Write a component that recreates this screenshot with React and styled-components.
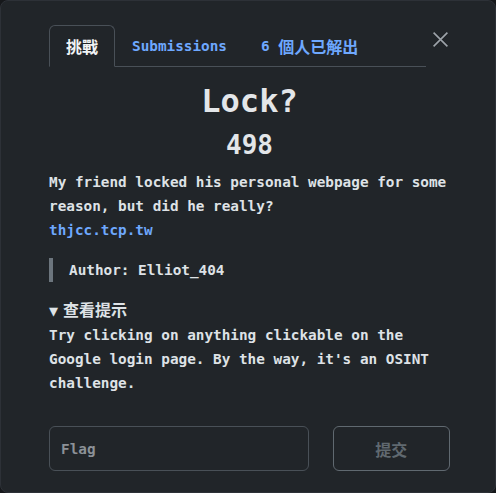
import React, { useState } from 'react';
import styled, { createGlobalStyle } from 'styled-components';

const GlobalStyle = createGlobalStyle`
  html, body {
    margin: 0;
    padding: 0;
    background: #16181b;
  }
  body {
    font-family: "DejaVu Sans Mono", "Noto Sans CJK TC", monospace;
    font-weight: bold;
    color: #dee2e6;
    -webkit-font-smoothing: antialiased;
  }
`;

const Modal = styled.div`
  box-sizing: border-box;
  width: 496px;
  height: 493px;
  background: #212529;
  border: 1px solid #2d3137;
  border-radius: 8px;
  padding: 24px 45px 0 48px;
  display: flex;
  flex-direction: column;
  overflow: hidden;
`;

const Header = styled.div`
  display: flex;
  align-items: flex-start;
  gap: 4px;
`;

const Tabs = styled.ul`
  list-style: none;
  margin: 0;
  padding: 0;
  flex: 1;
  display: flex;
  border-bottom: 1px solid #495057;
`;

const Tab = styled.li`
  box-sizing: border-box;
  height: 42px;
  padding: 0 16px;
  display: flex;
  align-items: center;
  margin-bottom: -1px;
  border: 1px solid ${p => (p.$active ? '#495057' : 'transparent')};
  border-bottom-color: ${p => (p.$active ? '#212529' : 'transparent')};
  border-radius: 6px 6px 0 0;
  color: ${p => (p.$active ? '#f1f3f5' : '#6ea8fe')};
  font-size: 14.35px;
  white-space: nowrap;
  cursor: pointer;
`;

const Cjk = styled.span`
  font-size: 16px;
`;

const CloseButton = styled.button`
  width: 20px;
  height: 20px;
  margin-top: 4px;
  padding: 0;
  border: 0;
  background: transparent;
  color: #9da3a9;
  display: flex;
  align-items: center;
  justify-content: center;
  cursor: pointer;
`;

const Title = styled.h1`
  margin: 15px 0 0;
  text-align: center;
  font-size: 32px;
  line-height: 38px;
  color: #e3e6e9;
`;

const Points = styled.div`
  margin-top: 10px;
  text-align: center;
  font-size: 26px;
  line-height: 30px;
  color: #e3e6e9;
`;

const Body = styled.div`
  margin-top: 10px;
  font-size: 14.35px;
  line-height: 24px;
`;

const Paragraph = styled.p`
  margin: 0;
`;

const Link = styled.a`
  color: #6ea8fe;
  text-decoration: none;
`;

const Quote = styled.blockquote`
  margin: 16px 0 0;
  padding: 0 0 0 16px;
  border-left: 4px solid #6c757d;
  line-height: 24px;
`;

const Hint = styled.details`
  margin-top: 17px;
  & > summary {
    list-style: none;
    cursor: pointer;
  }
  & > summary::-webkit-details-marker {
    display: none;
  }
`;

const Arrow = styled.span`
  font-size: 15px;
  margin-right: 5px;
`;

const FlagForm = styled.form`
  margin-top: auto;
  margin-bottom: 21px;
  display: flex;
  gap: 24px;
`;

const FlagInput = styled.input`
  box-sizing: border-box;
  width: 261px;
  height: 45px;
  padding: 0 11px;
  background: transparent;
  border: 1px solid #495057;
  border-radius: 6px;
  color: #dee2e6;
  font: inherit;
  font-size: 14.35px;
  outline: none;
  &::placeholder {
    color: #8c9197;
  }
`;

const SubmitButton = styled.button`
  box-sizing: border-box;
  width: 118px;
  height: 45px;
  background: transparent;
  border: 1px solid #6c757d;
  border-radius: 6px;
  color: #6c757d;
  font: inherit;
  font-size: 16px;
  opacity: 0.85;
`;

const CloseIcon = () => (
  <svg width="17" height="17" viewBox="0 0 16 16" fill="none" stroke="currentColor" strokeWidth="1.5">
    <path d="M1.5 1.5l13 13M14.5 1.5l-13 13" />
  </svg>
);

export default function App() {
  const [tab, setTab] = useState(0);
  const [flag, setFlag] = useState('');

  return (
    <>
      <GlobalStyle />
      <Modal>
        <Header>
          <Tabs>
            <Tab $active={tab === 0} onClick={() => setTab(0)}><Cjk>挑戰</Cjk></Tab>
            <Tab $active={tab === 1} onClick={() => setTab(1)}>Submissions</Tab>
            <Tab $active={tab === 2} onClick={() => setTab(2)}>6&nbsp;<Cjk>個人已解出</Cjk></Tab>
          </Tabs>
          <CloseButton aria-label="Close"><CloseIcon /></CloseButton>
        </Header>

        <Title>Lock?</Title>
        <Points>498</Points>

        <Body>
          <Paragraph>My friend locked his personal webpage for some reason, but did he really?</Paragraph>
          <Paragraph><Link href="#">thjcc.tcp.tw</Link></Paragraph>
          <Quote>Author: Elliot_404</Quote>
          <Hint open>
            <summary><Arrow>▼</Arrow><Cjk>查看提示</Cjk></summary>
            <Paragraph>Try clicking on anything clickable on the Google login page. By the way, it's an OSINT challenge.</Paragraph>
          </Hint>
        </Body>

        <FlagForm onSubmit={e => e.preventDefault()}>
          <FlagInput placeholder="Flag" value={flag} onChange={e => setFlag(e.target.value)} />
          <SubmitButton type="submit" disabled={!flag}><Cjk>提交</Cjk></SubmitButton>
        </FlagForm>
      </Modal>
    </>
  );
}
